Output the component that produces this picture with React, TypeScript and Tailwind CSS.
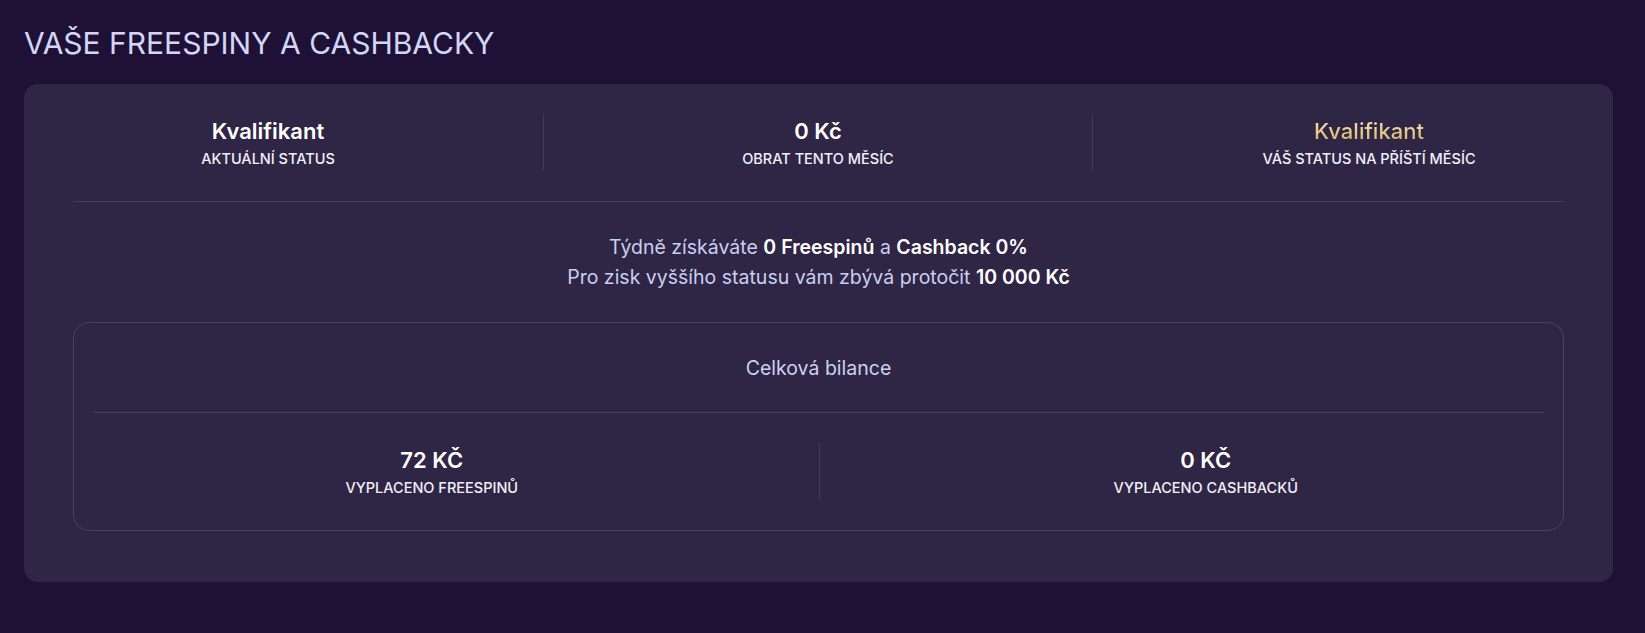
const font = { fontFamily: 'Inter, "Noto Sans", sans-serif' };

function Stat({ value, label, gold }: { value: string; label: string; gold?: boolean }) {
  return (
    <div className="flex h-[57px] flex-col items-center justify-center">
      <div
        className={
          gold
            ? 'bg-gradient-to-b from-[#fcecb6] to-[#d0ab63] bg-clip-text text-[22px] font-medium leading-7 text-transparent'
            : 'text-[22px] font-semibold leading-7 text-white'
        }
      >
        {value}
      </div>
      <div className="mt-[5px] text-[14.5px] font-medium uppercase leading-[18px] text-[#f1f0f8]">{label}</div>
    </div>
  );
}

export default function App() {
  return (
    <div className="min-h-screen bg-[#1f1135] px-6 pt-[25px] pb-10" style={font}>
      <h1 className="text-[30px] font-normal leading-9 text-[#d2d7f6]">VAŠE FREESPINY A CASHBACKY</h1>

      <div className="mt-[23px] w-[1589px] rounded-[14px] bg-[#2f2544] px-[49px] pt-[30px] pb-[51px]">
        <div className="grid grid-cols-[470px_549px_471px]">
          <div className="pr-[80px]">
            <Stat value="Kvalifikant" label="Aktuální status" />
          </div>
          <div className="border-l border-[#43395a]">
            <Stat value="0 Kč" label="Obrat tento měsíc" />
          </div>
          <div className="border-l border-[#43395a] pl-[82px]">
            <Stat value="Kvalifikant" label="Váš status na příští měsíc" gold />
          </div>
        </div>

        <div className="mt-[30px] h-px bg-[#463c5d]" />

        <div className="mt-[30px] text-center text-[19.5px] leading-[30px] text-[#c9cff1]">
          <p>
            Týdně získáváte <b className="font-semibold text-white">0 Freespinů</b> a{' '}
            <b className="font-semibold text-white">Cashback 0%</b>
          </p>
          <p>
            Pro zisk vyššího statusu vám zbývá protočit <b className="font-semibold text-white">10 000 Kč</b>
          </p>
        </div>

        <div className="mt-[30px] rounded-2xl border border-[#4a4062] px-[19px] pt-[31px] pb-[30px]">
          <div className="text-center text-[19.5px] leading-7 text-[#cdd2f2]">Celková bilance</div>
          <div className="mt-[30px] h-px bg-[#463c5d]" />
          <div className="mt-[30px] grid grid-cols-2">
            <div className="pr-[48px]">
              <Stat value="72 KČ" label="Vyplaceno freespinů" />
            </div>
            <div className="border-l border-[#43395a] pl-[48px]">
              <Stat value="0 KČ" label="Vyplaceno cashbacků" />
            </div>
          </div>
        </div>
      </div>
    </div>
  );
}
